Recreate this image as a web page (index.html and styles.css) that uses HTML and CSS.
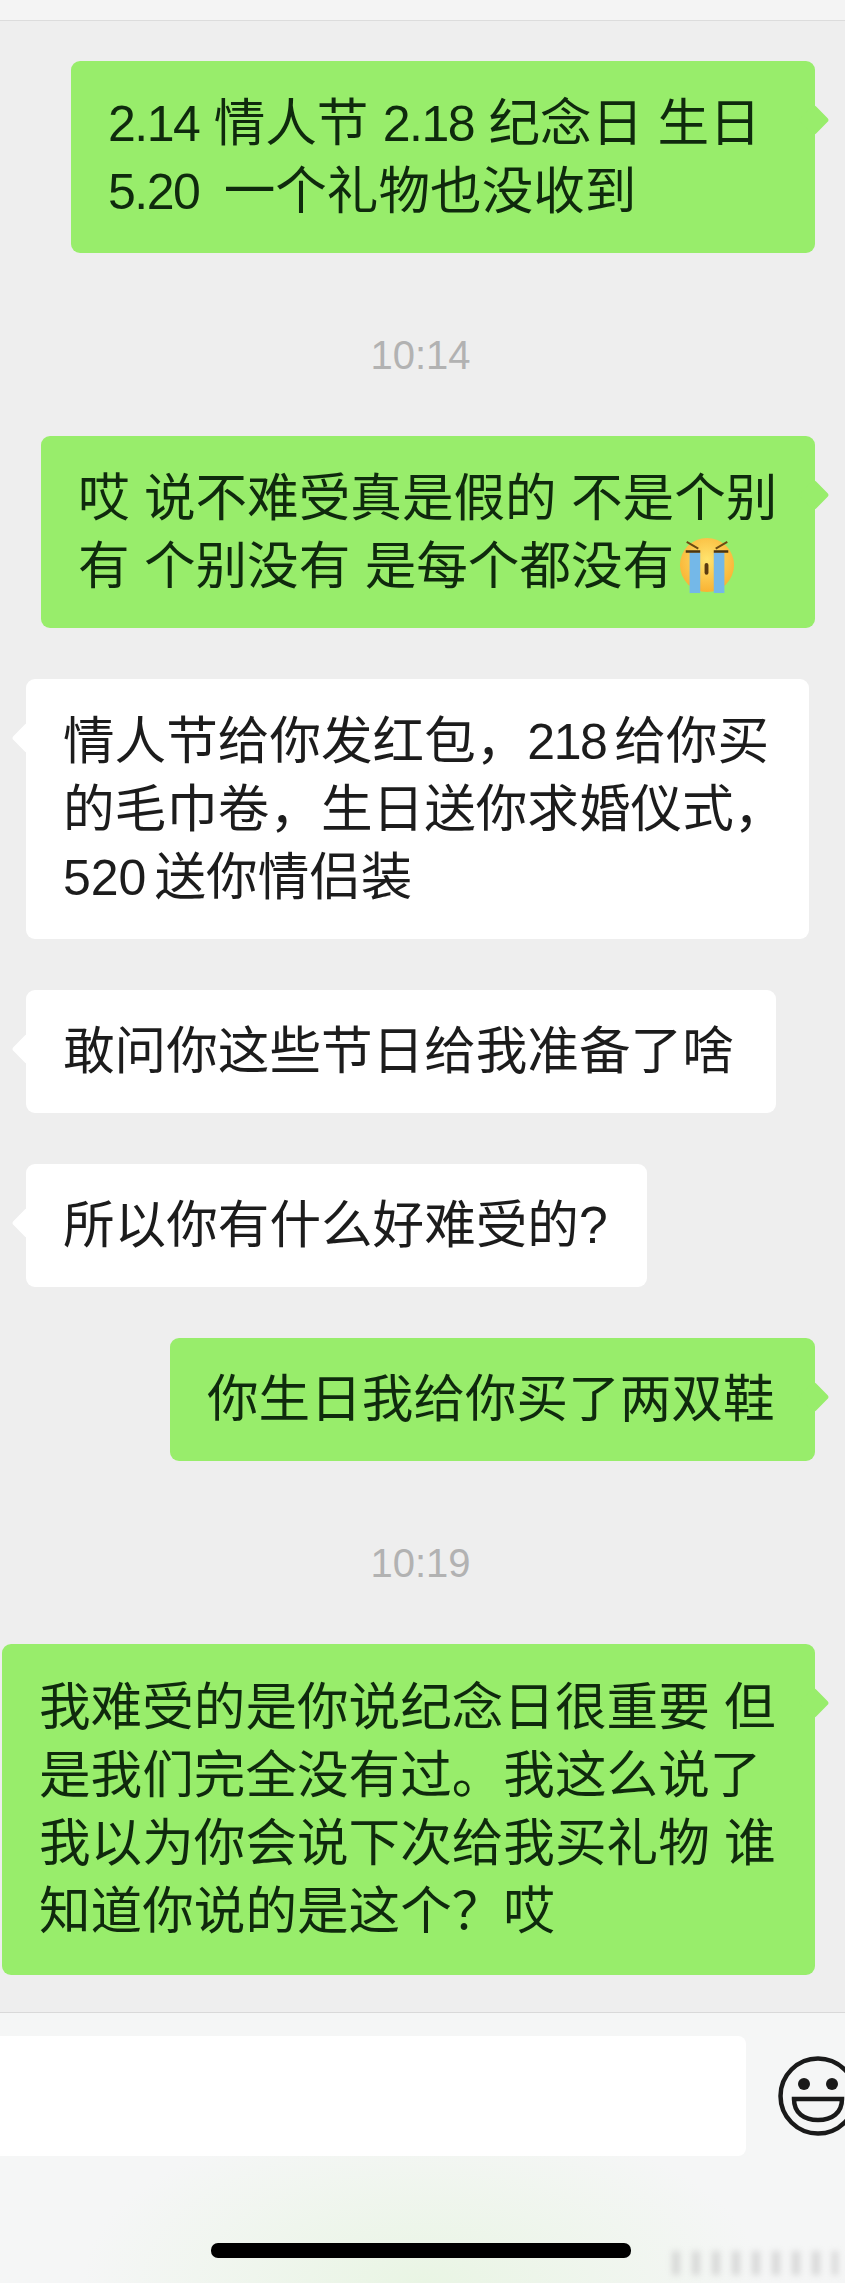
FILE: index.html
```html
<!DOCTYPE html>
<html lang="zh-CN">
<head>
  <meta charset="UTF-8">
  <title>聊天记录</title>
  <link rel="stylesheet" href="styles.css">
</head>
<body>
  <div class="top-strip"></div>

  <div class="chat">
    <div class="bubble me w-744"><span class="num">2.14</span> 情人节 <span class="num">2.18</span> 纪念日 生日<br><span class="num spaced">5.20</span> 一个礼物也没收到</div>

    <div class="time">10:14</div>

    <div class="bubble me w-774">哎 说不难受真是假的 不是个别<br>有 个别没有 是每个都没有<svg class="cry" viewBox="0 0 60 60">
        <defs>
          <radialGradient id="face" cx="50%" cy="40%" r="60%">
            <stop offset="0%" stop-color="#ffe46e"/>
            <stop offset="100%" stop-color="#f9b233"/>
          </radialGradient>
        </defs>
        <circle cx="30" cy="30" r="28" fill="url(#face)"/>
        <path d="M9 6l12 7M51 6l-12 7" stroke="#6b4a12" stroke-width="2" fill="none"/>
        <rect x="12" y="17" width="11" height="42" fill="#74b8e8"/>
        <rect x="37" y="17" width="11" height="42" fill="#74b8e8"/>
        <path d="M8 16h15M37 16h15" stroke="#4a3510" stroke-width="2.5"/>
        <rect x="27.5" y="28" width="4" height="12" rx="2" fill="#5a3a10"/>
      </svg></div>

    <div class="bubble them w-783">情人节给你发红包，<span class="num tight">218</span>给你买<br>的毛巾卷，生日送你求婚仪式，<br><span class="num tight plain">520</span>送你情侣装</div>

    <div class="bubble them one w-750">敢问你这些节日给我准备了啥</div>

    <div class="bubble them one w-621">所以你有什么好难受的?</div>

    <div class="bubble me one w-645">你生日我给你买了两双鞋</div>

    <div class="time">10:19</div>

    <div class="bubble me w-813 tall">我难受的是你说纪念日很重要 但<br>是我们完全没有过。我这么说了<br>我以为你会说下次给我买礼物 谁<br>知道你说的是这个？哎</div>
  </div>

  <div class="footer">
    <div class="input-row">
      <div class="input-box"></div>
      <svg class="smiley" viewBox="0 0 80 80">
        <circle cx="40" cy="40" r="37.5" fill="none" stroke="#1a1a1a" stroke-width="4.5"/>
        <circle cx="26" cy="28" r="6" fill="#1a1a1a"/>
        <circle cx="54" cy="28" r="6" fill="#1a1a1a"/>
        <path d="M16 43h48c0 14-10 21-24 21s-24-7-24-21z" fill="none" stroke="#1a1a1a" stroke-width="4.5"/>
      </svg>
    </div>
    <div class="home-bar"></div>
    <div class="watermark"></div>
  </div>
</body>
</html>
```

FILE: styles.css
```css
html, body {
  margin: 0;
  padding: 0;
}

body {
  width: 845px;
  height: 2283px;
  overflow: hidden;
  display: flex;
  flex-direction: column;
  background-color: #eeeeee;
  font-family: 'Liberation Sans', 'Noto Sans CJK SC', sans-serif;
}

.top-strip {
  height: 20px;
  background: #f4f4f4;
  border-bottom: 1px solid #dcdcdc;
}

.chat {
  flex-grow: 1;
  display: flex;
  flex-direction: column;
  gap: 51px;
  padding: 40px 30px 0 26px;
}

.bubble {
  position: relative;
  box-sizing: border-box;
  padding: 28px 0 28px 37px;
  border-radius: 9px;
  font-size: 51.6px;
  line-height: 68px;
  white-space: nowrap;
}

.one {
  padding-top: 27px;
}

.tall {
  padding-top: 29px;
  padding-bottom: 30px;
}

.bubble::after {
  content: "";
  position: absolute;
  top: 48px;
  width: 22px;
  height: 22px;
  border-radius: 3px;
  background: inherit;
  transform: rotate(45deg);
}

.me {
  align-self: flex-end;
  background-color: #98ed6b;
  color: #0f2a0d;
}

.me::after {
  right: -10px;
}

.them {
  align-self: flex-start;
  background-color: #ffffff;
  color: #1c1c1c;
}

.them::after {
  left: -10px;
}

.num {
  font-size: 50px;
  line-height: 1;
  letter-spacing: -1.5px;
}

.tight {
  margin-right: 8px;
}

.plain {
  letter-spacing: 0;
}

.spaced {
  margin-right: 10px;
}

.w-744 { width: 744px; }
.w-774 { width: 774px; }
.w-783 { width: 783px; }
.w-750 { width: 750px; }
.w-621 { width: 621px; }
.w-645 { width: 645px; }
.w-813 { width: 813px; }

.cry {
  width: 58px;
  height: 58px;
  margin-left: 4px;
  vertical-align: -10px;
}

.time {
  height: 60px;
  margin-top: 21px;
  text-align: center;
  font-size: 40px;
  line-height: 60px;
  color: #b2b2b2;
}

.footer {
  position: relative;
  height: 270px;
  border-top: 1px solid #d9d9d9;
  background:
    radial-gradient(ellipse 340px 170px at 50% 100%, #e9f5e4, rgba(233, 245, 228, 0) 100%),
    #f5f6f6;
}

.input-row {
  display: flex;
  align-items: center;
  gap: 32px;
  padding-top: 23px;
}

.input-box {
  flex-shrink: 0;
  width: 746px;
  height: 120px;
  background: #ffffff;
  border-radius: 0 8px 8px 0;
}

.smiley {
  flex-shrink: 0;
  width: 80px;
  height: 80px;
}

.home-bar {
  width: 420px;
  height: 15px;
  margin: 87px 0 0 211px;
  background: #000000;
  border-radius: 7px;
}

.watermark {
  position: absolute;
  left: 672px;
  bottom: 8px;
  width: 166px;
  height: 24px;
  background: repeating-linear-gradient(90deg, #c4c4c4 0 8px, transparent 8px 20px);
  filter: blur(3px);
  opacity: 0.6;
}
```
